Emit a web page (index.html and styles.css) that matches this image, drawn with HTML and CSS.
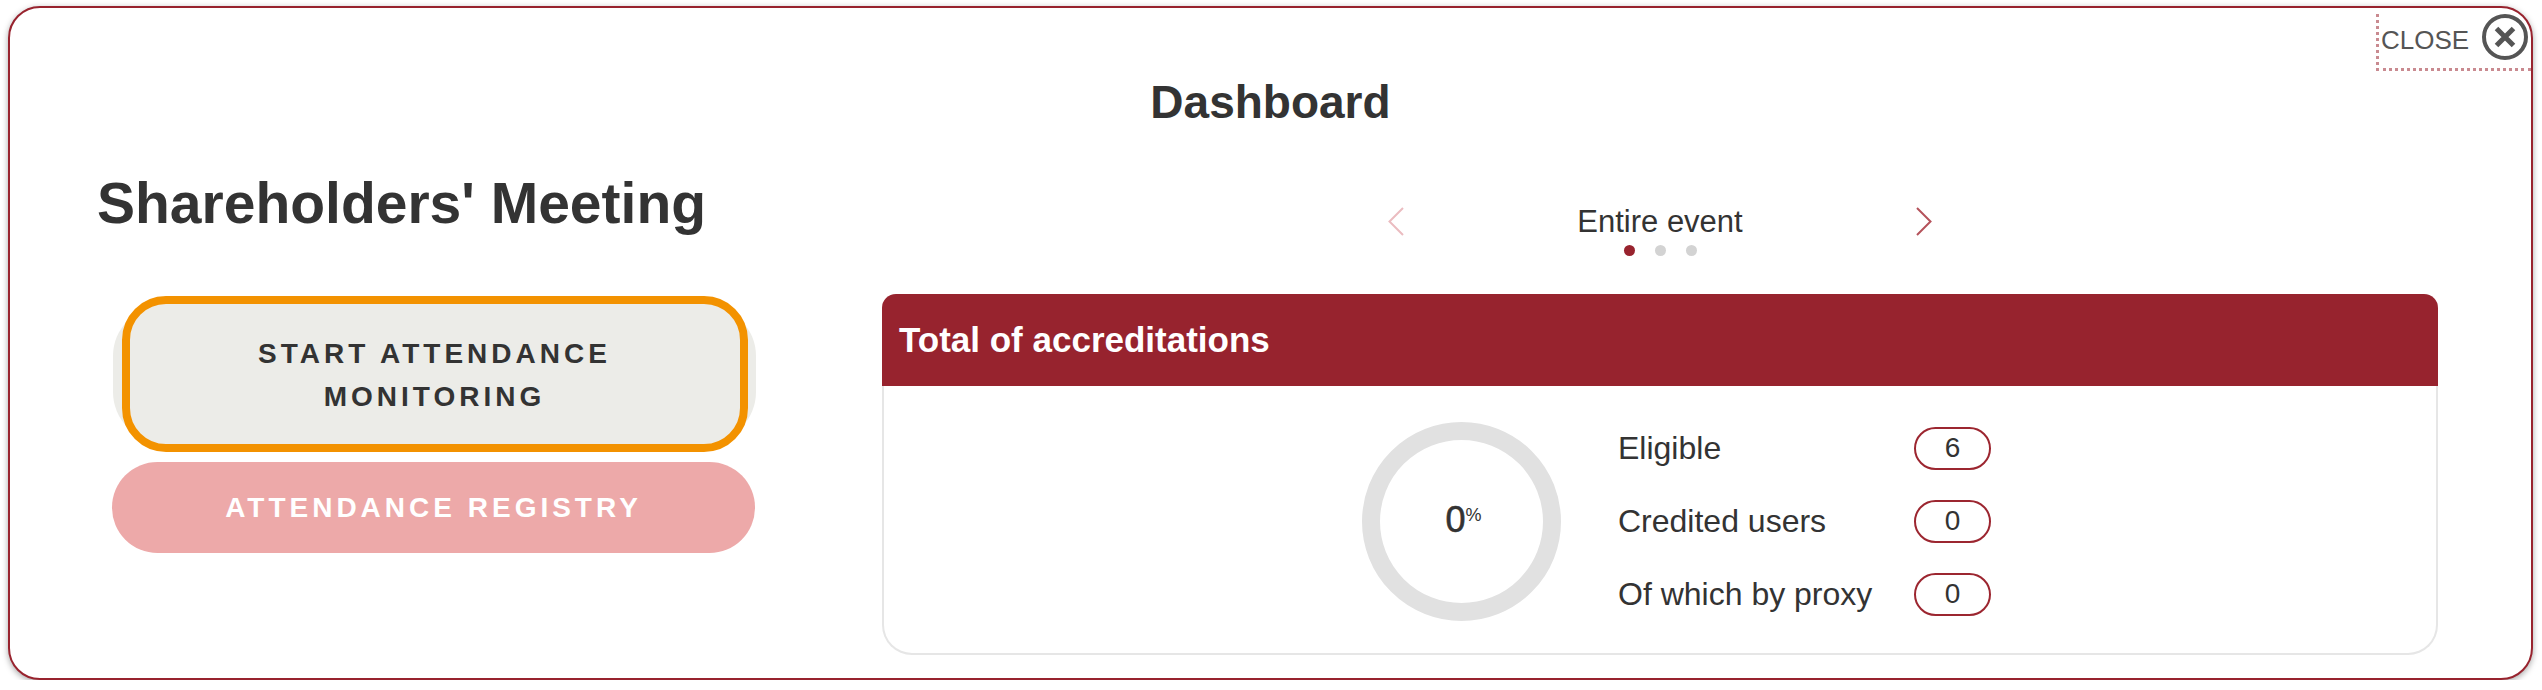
FILE: index.html
```html
<!DOCTYPE html>
<html lang="en">
<head>
<meta charset="utf-8">
<title>Dashboard</title>
<link rel="stylesheet" href="styles.css">
</head>
<body>
<div class="modal">
  <div class="close">
    <span class="close-label">CLOSE</span>
    <svg class="close-icon" width="48" height="48" viewBox="0 0 48 48">
      <circle cx="24" cy="24" r="21" fill="none" stroke="#555" stroke-width="4"/>
      <path d="M15.5 15.5 L32.5 32.5 M32.5 15.5 L15.5 32.5" stroke="#555" stroke-width="5" fill="none"/>
    </svg>
  </div>
  <h1 class="page-title">Dashboard</h1>
  <div class="main">
    <div class="left-col">
      <h2 class="meeting-title">Shareholders' Meeting</h2>
      <div class="start-wrap">
        <div class="btn-start">START ATTENDANCE MONITORING</div>
      </div>
      <div class="btn-registry">ATTENDANCE REGISTRY</div>
    </div>
    <div class="right-col">
      <div class="carousel">
        <svg class="chev" width="16" height="29" viewBox="0 0 16 29"><polyline points="15,1 1.5,14.5 15,28" fill="none" stroke="#ebbcc0" stroke-width="2"/></svg>
        <div class="carousel-mid">
          <div class="carousel-label">Entire event</div>
          <div class="dots">
            <span class="dot dot-active"></span>
            <span class="dot"></span>
            <span class="dot"></span>
          </div>
        </div>
        <svg class="chev" width="16" height="29" viewBox="0 0 16 29"><polyline points="1,1 14.5,14.5 1,28" fill="none" stroke="#b5525b" stroke-width="2"/></svg>
      </div>
      <div class="card">
        <div class="card-header">Total of accreditations</div>
        <div class="card-body">
          <div class="donut">
            <span class="donut-num">0</span><span class="donut-pct">%</span>
          </div>
          <div class="stats">
            <div class="stat-label">Eligible</div>
            <div class="badge">6</div>
            <div class="stat-label">Credited users</div>
            <div class="badge">0</div>
            <div class="stat-label">Of which by proxy</div>
            <div class="badge">0</div>
          </div>
        </div>
      </div>
    </div>
  </div>
</div>
</body>
</html>
```
FILE: styles.css
```css
* { box-sizing: border-box; }

html, body {
  margin: 0;
  padding: 0;
  background: #fff;
}

body {
  font-family: "Liberation Sans", Arial, sans-serif;
  color: #333;
}

.modal {
  position: relative;
  margin: 6px 0 0 8px;
  width: 2525px;
  height: 674px;
  border: 2px solid #98232e;
  border-radius: 32px;
  box-shadow: 0 2px 6px rgba(0, 0, 0, 0.35);
  padding-top: 71px;
  overflow: hidden;
  background: #fff;
}

.close {
  position: absolute;
  top: 6px;
  right: 0;
  width: 155px;
  height: 57px;
  border-left: 3px dotted #c98a90;
  border-bottom: 3px dotted #c98a90;
  display: flex;
  align-items: center;
  padding: 0 0 8px 2px;
  gap: 12px;
}

.close-label {
  font-size: 26px;
  color: #555;
  line-height: 1;
  margin-top: 5px;
}

.close-icon { display: block; flex: none; }

.page-title {
  margin: 0;
  text-align: center;
  font-size: 46px;
  line-height: 46px;
  font-weight: bold;
  color: #333;
}

.main {
  display: flex;
  padding-left: 87px;
  gap: 126px;
}

.left-col {
  width: 659px;
  margin-top: 50px;
}

.meeting-title {
  margin: 0;
  font-size: 57px;
  line-height: 57px;
  font-weight: bold;
  color: #333;
}

.start-wrap {
  margin: 74px 0 0 16px;
  width: 643px;
  height: 136px;
  border-radius: 50px;
  background: #ecece8;
  display: flex;
  align-items: center;
  justify-content: center;
}

.btn-start {
  flex: none;
  width: 626px;
  height: 156px;
  border: 8px solid #f39200;
  border-radius: 44px;
  background: #ecece8;
  display: flex;
  align-items: center;
  justify-content: center;
  text-align: center;
  padding: 2px 120px 0;
  font-size: 28px;
  line-height: 43px;
  font-weight: bold;
  letter-spacing: 4px;
  color: #333;
}

.btn-registry {
  margin: 20px 0 0 15px;
  width: 643px;
  height: 91px;
  border-radius: 46px;
  background: #eda9a9;
  color: #fff;
  display: flex;
  align-items: center;
  justify-content: center;
  font-size: 28px;
  font-weight: bold;
  letter-spacing: 4px;
}

.right-col {
  width: 1556px;
  margin-top: 81px;
}

.carousel {
  display: flex;
  justify-content: center;
  align-items: flex-start;
}

.chev { display: block; flex: none; margin-top: 1px; }

.carousel-mid {
  width: 512px;
  display: flex;
  flex-direction: column;
  align-items: center;
}

.carousel-label {
  font-size: 31px;
  line-height: 31px;
  color: #333;
}

.dots {
  display: flex;
  gap: 20px;
  margin-top: 8px;
}

.dot {
  width: 11px;
  height: 11px;
  border-radius: 50%;
  background: #d3d3d3;
}

.dot-active { background: #98232e; }

.card {
  margin-top: 38px;
}

.card-header {
  height: 92px;
  background: #97232e;
  border-radius: 14px 14px 0 0;
  color: #fff;
  font-size: 35px;
  font-weight: bold;
  display: flex;
  align-items: center;
  padding-left: 17px;
}

.card-body {
  height: 269px;
  border: 2px solid #e6e6e6;
  border-top: none;
  border-radius: 0 0 30px 30px;
  display: flex;
  align-items: center;
  justify-content: center;
  gap: 57px;
  padding: 3px 0 0 33px;
}

.donut {
  width: 199px;
  height: 199px;
  border-radius: 50%;
  border: 18px solid #e1e1e1;
  display: flex;
  align-items: flex-start;
  justify-content: center;
  padding-top: 62px;
  padding-left: 4px;
}

.donut-num {
  font-size: 36px;
  line-height: 36px;
  color: #333;
  -webkit-text-stroke: 0.6px #333;
}

.donut-pct {
  font-size: 18px;
  line-height: 18px;
  margin-top: 4px;
  color: #333;
}

.stats {
  display: grid;
  grid-template-columns: 296px 77px;
  grid-auto-rows: 43px;
  row-gap: 30px;
  align-items: center;
}

.stat-label {
  font-size: 32px;
  color: #333;
}

.badge {
  height: 43px;
  border: 2px solid #9c2630;
  border-radius: 22px;
  display: flex;
  align-items: center;
  justify-content: center;
  font-size: 28px;
  color: #333;
}
```
